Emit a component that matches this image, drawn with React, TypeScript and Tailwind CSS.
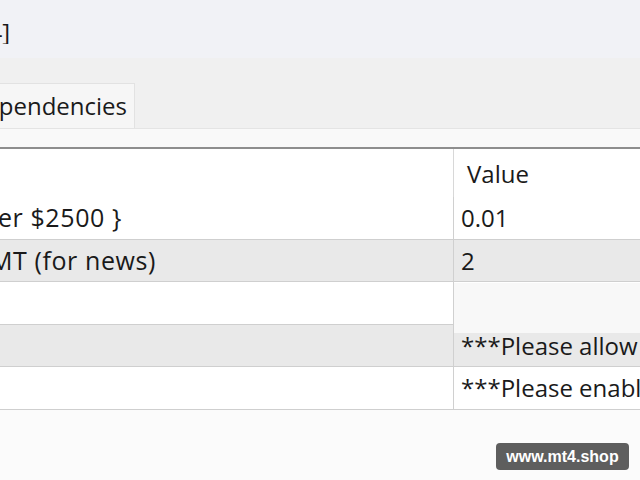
import React from 'react';

// visible tail of each left-column label, clipped at the window edge
const rows = [
  { name: 'Lot Size { 0.01 Per $2500 }', end: 122, value: '0.01', shade: false, h: 'h-[43px]' },
  { name: 'MT (for news)', end: 156, value: '2', shade: true, h: 'h-[42px]' },
  { name: '', end: 0, value: '', shade: false, h: 'h-[43px]' },
  { name: '', end: 0, value: '***Please allow', shade: true, h: 'h-[42px]' },
  { name: '', end: 0, value: '***Please enable', shade: false, h: 'h-[43px]' },
];

const font = { fontFamily: '"Open Sans", "Noto Sans", sans-serif' };

const App: React.FC = () => {
  return (
    <div className="relative w-[640px] h-[480px] overflow-hidden bg-[#fbfbfb] text-[#1a1a1a]" style={font}>
      {/* Title strip */}
      <div className="h-[58px] bg-[#f1f2f6] flex items-center">
        <div className="w-[10px] overflow-hidden flex justify-end whitespace-nowrap text-[24px] leading-none mt-[6px]">
          <span>v1.4]</span>
        </div>
      </div>

      {/* Tabs bar */}
      <div className="h-[70px] bg-[#f0f0f0] flex items-end">
        <div className="h-[45px] w-[135px] pr-[7px] bg-[#f6f6f6] border-r border-t border-[#e2e2e2] overflow-hidden flex items-center justify-end whitespace-nowrap">
          <span className="text-[24px]">Dependencies</span>
        </div>
      </div>
      <div className="h-[19px] bg-[#f9f9f9] border-t border-[#e4e4e4]" />
      <div className="h-[2px] bg-[#8e8e8e]" />

      {/* Table */}
      <div className="relative bg-white">
        <div className="flex h-[48px]">
          <div className="w-[453px] shrink-0" />
          <div className="flex-1 border-l border-[#d8d8d8] pl-[13px] pt-[2px] flex items-center text-[24px]">Value</div>
        </div>
        {rows.map((r, i) => (
          <div
            key={i}
            className={`flex ${r.h} border-b border-[#cfcfcf] ${r.shade ? 'bg-[#e9e9e9]' : 'bg-white'}`}
          >
            <div className="w-[453px] shrink-0 flex items-center text-[25px] tracking-[0.6px]">
              {r.name && (
                <div className="overflow-hidden flex justify-end whitespace-nowrap" style={{ width: r.end }}>
                  <span>{r.name}</span>
                </div>
              )}
            </div>
            <div className="flex-1 min-w-0 overflow-hidden border-l border-[#d0d0d0] pl-[7px] flex items-center whitespace-nowrap text-[24px]">
              {r.value}
            </div>
          </div>
        ))}
        {/* inline edit box over the third row */}
        <div className="absolute left-[454px] right-0 top-[134px] h-[50px] bg-[#f8f8f8]" />
      </div>

      {/* Watermark */}
      <div
        className="absolute left-[496px] top-[443px] w-[133px] h-[27px] rounded-[4px] bg-[#5e5e5e] text-white text-[16px] font-bold flex items-center justify-center"
        style={{ fontFamily: '"Liberation Sans", Arial, sans-serif' }}
      >
        www.mt4.shop
      </div>
    </div>
  );
};

export default App;
